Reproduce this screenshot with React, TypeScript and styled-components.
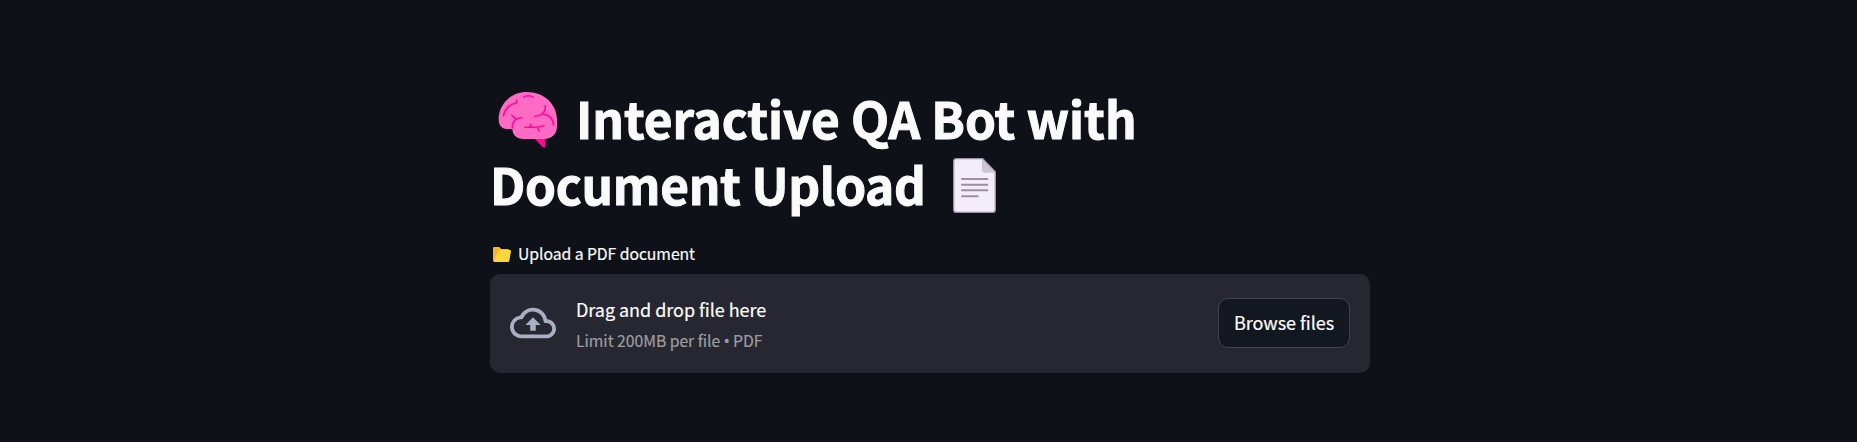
import React from "react";
import styled, { createGlobalStyle } from "styled-components";

const GlobalStyle = createGlobalStyle`
  html, body { margin: 0; background: #0e1117; }
  * { box-sizing: border-box; }
`;

const Page = styled.main`
  min-height: 442px;
  padding-top: 85px;
  background: #0e1117;
  color: #fafafa;
  font-family: "Noto Sans CJK SC", "Noto Sans", sans-serif;
`;

const Column = styled.div`
  width: 880px;
  margin-left: 490px;
`;

const Title = styled.h1`
  margin: 0;
  font-size: 49.5px;
  font-weight: 700;
  line-height: 66px;
  -webkit-text-stroke: 1px #fafafa;
`;

const TitleLine = styled.span<{ $tracking: number }>`
  display: flex;
  align-items: flex-start;
  height: 66px;
  letter-spacing: ${(p) => p.$tracking}px;
  white-space: nowrap;
`;

const BrainSvg = styled.svg`
  flex: none;
  width: 60px;
  height: 57px;
  margin: 6px 18px 0 8px;
`;

const PageSvg = styled.svg`
  flex: none;
  width: 43px;
  height: 55px;
  margin: 7px 0 0 27px;
`;

const Label = styled.label`
  display: flex;
  align-items: center;
  height: 26px;
  margin: 24px 0 7px;
  padding-left: 2px;
  gap: 6px;
  font-size: 15.75px;
  letter-spacing: -0.06px;
  line-height: 26px;
  white-space: nowrap;
  -webkit-text-stroke: 0.2px #fafafa;
`;

const FolderSvg = styled.svg`
  flex: none;
  width: 20px;
  height: 17px;
`;

const Dropzone = styled.section`
  display: flex;
  align-items: center;
  height: 99px;
  padding: 0 20px 2px;
  border-radius: 10px;
  background: #262730;
`;

const CloudSvg = styled.svg`
  flex: none;
  width: 46px;
  height: 46px;
  margin-right: 20px;
  fill: #a9aec4;
`;

const Instructions = styled.div`
  display: flex;
  flex: 1;
  flex-direction: column;
  padding-top: 2px;
  white-space: nowrap;
`;

const Prompt = styled.span`
  font-size: 18px;
  letter-spacing: -0.04px;
  line-height: 32px;
  -webkit-text-stroke: 0.2px #fafafa;
`;

const Limit = styled.span`
  margin-top: 2px;
  color: #9c9da1;
  font-size: 15.75px;
  letter-spacing: -0.04px;
  line-height: 28px;
  -webkit-text-stroke: 0.2px #9c9da1;
`;

const Bullet = styled.span`
  font-family: "Noto Sans", sans-serif;
  line-height: 1;
`;

const BrowseButton = styled.button`
  width: 132px;
  height: 50px;
  padding: 0 0 1px;
  border: 1px solid #41444c;
  border-radius: 10px;
  background: #131720;
  color: #fafafa;
  font-family: inherit;
  font-size: 18px;
  letter-spacing: -0.05px;
  line-height: 32px;
  white-space: nowrap;
  -webkit-text-stroke: 0.2px #fafafa;
`;

const BrainIcon = () => (
  <BrainSvg viewBox="54 33 180 171" aria-hidden="true">
    <path fill="#fb0a96" d="M162 174L188 201Q196 205 196 196V170Z" />
    <path
      fill="#ff6bc4"
      d="M140 36C94 36 56 71 56 118C56 137 66 147 80 147H97C98 166 111 177 130 177H191C216 177 231 162 231 138V116C228 70 192 36 140 36Z"
    />
    <g fill="none" stroke="#fb0a96" strokeWidth="4.6" strokeLinecap="butt">
      <path d="M129 52Q145 43 161 52" />
      <path d="M70 109C73 88 90 72 110 68Q112 64 109 58" />
      <path d="M94 105Q105 112 108 119M127 113C109 113 96 122 97 145" />
      <path d="M196 75C198 94 187 108 162 109M188 103C207 103 219 116 221 137" />
      <path d="M133 142H166Q182 141 194 136M152 131Q154 139 148 142M172 142Q174 151 180 154" />
    </g>
  </BrainSvg>
);

const PageIcon = () => (
  <PageSvg viewBox="399 234 129 165" aria-hidden="true">
    <path
      fill="#f3edf9"
      stroke="#998ea4"
      strokeWidth="4"
      d="M409 236H488L526 275V389Q526 397 518 397H409Q401 397 401 389V244Q401 236 409 236Z"
    />
    <path fill="#cdc4d6" d="M486 238L526 278H493Q486 278 486 271Z" />
    <path
      stroke="#998ea4"
      strokeWidth="6"
      strokeLinecap="round"
      d="M426 297H502M426 314H502M426 331H502M426 349H473"
    />
  </PageSvg>
);

const FolderIcon = () => (
  <FolderSvg viewBox="36 36 60 51" aria-hidden="true">
    <path fill="#ffb02e" d="M39 42Q39 39 42 39H56Q59 39 61 42L64 45H83Q87 45 87 49V83H42Q39 83 39 79Z" />
    <path fill="#fcd53f" d="M54 51Q55 48 58 48H90Q94 48 93 52L88 80Q87 84 83 84H44Q41 84 42 80Z" />
  </FolderSvg>
);

const CloudUploadIcon = () => (
  <CloudSvg viewBox="0 0 24 24" aria-hidden="true">
    <path d="M19.35 10.04A7.49 7.49 0 0 0 12 4C9.11 4 6.6 5.64 5.35 8.04A5.994 5.994 0 0 0 0 14c0 3.31 2.69 6 6 6h13c2.76 0 5-2.24 5-5 0-2.64-2.05-4.78-4.65-4.96zM19 18H6c-2.21 0-4-1.79-4-4 0-2.05 1.53-3.76 3.56-3.97l1.07-.11.5-.95A5.469 5.469 0 0 1 12 6c2.62 0 4.88 1.86 5.39 4.43l.3 1.5 1.53.11A2.98 2.98 0 0 1 22 15c0 1.65-1.35 3-3 3zM8 13h2.55v3h2.9v-3H16l-4-4z" />
  </CloudSvg>
);

export default function App() {
  return (
    <Page>
      <GlobalStyle />
      <Column>
        <Title>
          <TitleLine $tracking={-0.05}>
            <BrainIcon />
            <span>Interactive QA Bot with</span>
          </TitleLine>
          <TitleLine $tracking={-0.3}>
            <span>Document Upload</span>
            <PageIcon />
          </TitleLine>
        </Title>
        <Label>
          <FolderIcon />
          <span>Upload a PDF document</span>
        </Label>
        <Dropzone>
          <CloudUploadIcon />
          <Instructions>
            <Prompt>Drag and drop file here</Prompt>
            <Limit>
              Limit 200MB per file <Bullet>•</Bullet> PDF
            </Limit>
          </Instructions>
          <BrowseButton type="button">Browse files</BrowseButton>
        </Dropzone>
      </Column>
    </Page>
  );
}
